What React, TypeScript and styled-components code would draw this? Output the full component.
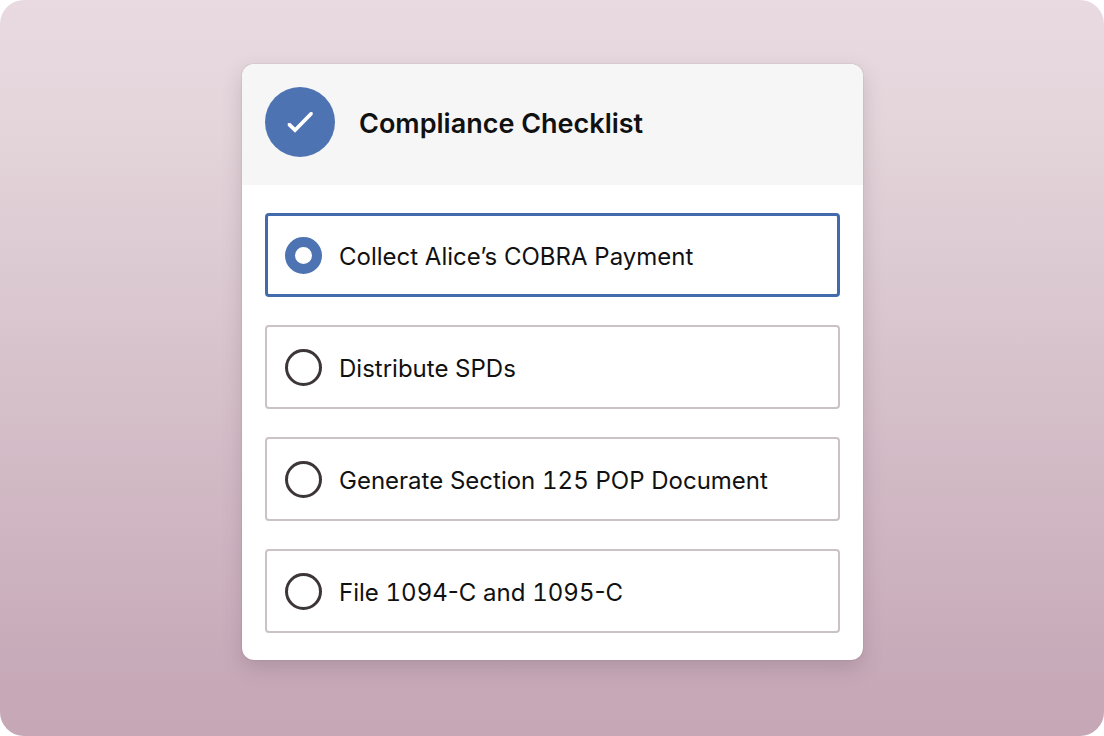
import React, { useState } from "react";
import styled, { createGlobalStyle } from "styled-components";

const colors = {
  blue: "#4e73b2",
  outline: "#446aae",
  ink: "#111111",
  ring: "#3c3539",
  line: "#cbc2c6",
};

const GlobalStyle = createGlobalStyle`
  *, *::before, *::after { box-sizing: border-box; }
  body { margin: 0; background: #ffffff; }
`;

const Stage = styled.main`
  min-height: 100vh;
  display: flex;
  justify-content: center;
  align-items: flex-start;
  padding: 64px 24px 76px 25px;
  border-radius: 24px;
  background: linear-gradient(180deg, #e9dae1 0%, #e3d5da 18%, #c6a8b7 94%, #c5a7b6 100%);
  font-family: Inter, "Liberation Sans", sans-serif;
  color: ${colors.ink};
`;

const Card = styled.section`
  width: 100%;
  max-width: 621px;
  border-radius: 12px;
  background: #ffffff;
  overflow: hidden;
  box-shadow: 0 0 1px rgba(60, 40, 50, 0.5), 0 8px 20px rgba(90, 70, 80, 0.22);
`;

const CardHeader = styled.header`
  display: flex;
  align-items: center;
  gap: 24px;
  padding: 23px 23px 28px;
  background: #f6f6f6;
`;

const Badge = styled.span`
  display: flex;
  flex: none;
  width: 70px;
  height: 70px;
  border-radius: 50%;
  background: ${colors.blue};
`;

const Title = styled.h1`
  margin: 0;
  padding-top: 3px;
  font-size: 27px;
  line-height: 32px;
  font-weight: 600;
`;

const Checklist = styled.form`
  display: flex;
  flex-direction: column;
  gap: 28px;
  padding: 28px 23px 27px;
`;

const Option = styled.label<{ $selected: boolean }>`
  display: flex;
  align-items: center;
  gap: 17px;
  min-height: 84px;
  padding: 0 ${({ $selected }) => ($selected ? 17 : 18)}px;
  border: ${({ $selected }) => ($selected ? `3px solid ${colors.outline}` : `2px solid ${colors.line}`)};
  border-radius: 4px;
  cursor: pointer;
`;

const OptionText = styled.span`
  padding-top: 3px;
  font-size: 24px;
  line-height: 32px;
`;

const Digits = styled.span`
  font-variant-numeric: tabular-nums;
`;

const Radio = styled.input`
  appearance: none;
  flex: none;
  width: 37px;
  height: 37px;
  margin: 0;
  border: 3px solid ${colors.ring};
  border-radius: 50%;
  background: #ffffff;
  cursor: pointer;

  &:checked {
    border: 10px solid ${colors.blue};
  }
`;

const tasks = [
  "Collect Alice’s COBRA Payment",
  "Distribute SPDs",
  "Generate Section 125 POP Document",
  "File 1094-C and 1095-C",
];

// Form and section numbers are set in figures of equal width.
function TaskName({ name }: { name: string }) {
  return (
    <OptionText>
      {name.split(/(\d+)/).map((part, index) =>
        index % 2 === 1 ? <Digits key={index}>{part}</Digits> : part
      )}
    </OptionText>
  );
}

export default function App() {
  const [selected, setSelected] = useState(0);

  return (
    <>
      <GlobalStyle />
      <Stage>
        <Card aria-labelledby="checklist-title">
          <CardHeader>
            <Badge aria-hidden="true">
              <svg width="70" height="70" viewBox="0 0 70 70" fill="none">
                <path d="M23.8 37.2 L30 43.2 L46.6 26.2" stroke="#ffffff" strokeWidth="3.7" />
                <path d="M23.8 37.2 L30 43.2 L46.6 26.2" stroke="#ffffff" strokeWidth="2.4" strokeLinecap="round" />
              </svg>
            </Badge>
            <Title id="checklist-title">Compliance Checklist</Title>
          </CardHeader>
          <Checklist>
            {tasks.map((task, index) => (
              <Option key={task} $selected={selected === index}>
                <Radio
                  type="radio"
                  name="task"
                  checked={selected === index}
                  onChange={() => setSelected(index)}
                />
                <TaskName name={task} />
              </Option>
            ))}
          </Checklist>
        </Card>
      </Stage>
    </>
  );
}
